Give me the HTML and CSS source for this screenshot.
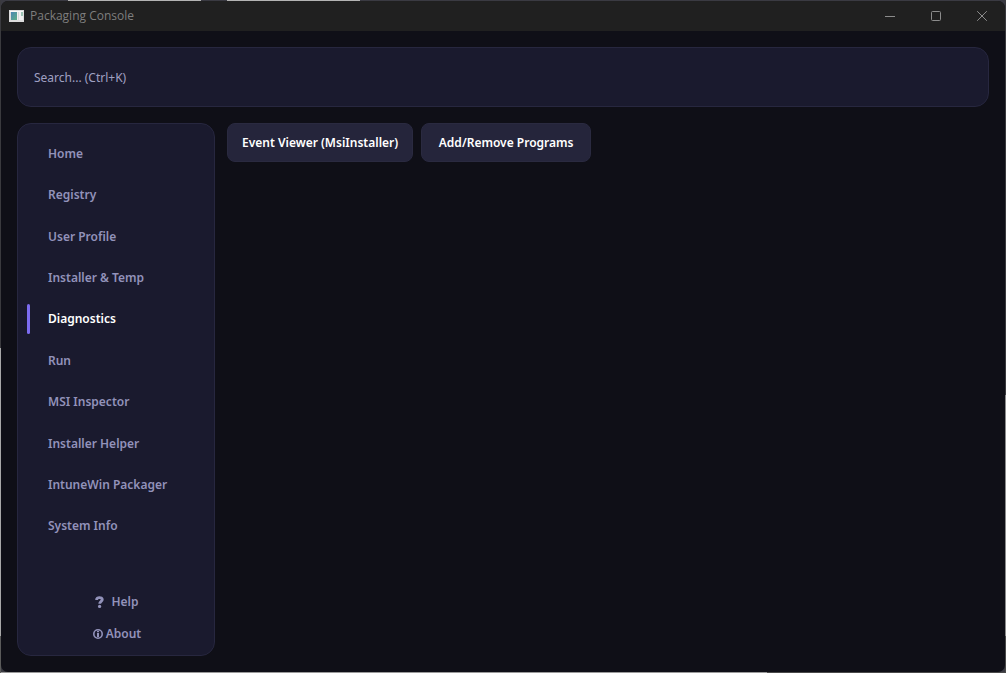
FILE: index.html
```html
<!DOCTYPE html>
<html lang="en">
<head>
  <meta charset="UTF-8">
  <meta name="viewport" content="width=device-width, initial-scale=1">
  <title>Packaging Console</title>
  <link rel="stylesheet" href="styles.css">
</head>
<body>
  <div class="window">
    <header class="titlebar">
      <svg class="app-icon" width="15" height="12" viewBox="0 0 15 12" aria-hidden="true">
        <defs>
          <linearGradient id="paneFill" x1="0" y1="0" x2="1" y2="1">
            <stop offset="0" stop-color="#4a86b4"/>
            <stop offset="1" stop-color="#5fae86"/>
          </linearGradient>
        </defs>
        <rect width="15" height="12" fill="#dcdcdc"/>
        <rect x="1" y="1" width="13" height="1" fill="#f8f8f8"/>
        <rect x="2" y="2" width="6" height="8" fill="url(#paneFill)"/>
        <rect x="8" y="2" width="4" height="8" fill="#f0f0f0"/>
        <rect x="9" y="2" width="1" height="8" fill="#d8d8dc"/>
        <rect x="12" y="2" width="2" height="4" fill="#9cc4b4"/>
        <rect x="12" y="6" width="2" height="4" fill="#f0f0f0"/>
      </svg>
      <span class="title">Packaging Console</span>
      <div class="window-controls">
        <button class="control" type="button" aria-label="Minimize">
          <svg width="10" height="10" viewBox="0 0 10 10"><path d="M0 5.5h10"/></svg>
        </button>
        <button class="control" type="button" aria-label="Maximize">
          <svg width="10" height="10" viewBox="0 0 10 10"><rect x="0.5" y="0.5" width="9" height="9" rx="1"/></svg>
        </button>
        <button class="control" type="button" aria-label="Close">
          <svg width="10" height="10" viewBox="0 0 10 10"><path d="M0.2 0.2l9.6 9.6M9.8 0.2l-9.6 9.6"/></svg>
        </button>
      </div>
    </header>

    <div class="content">
      <input class="search" type="search" placeholder="Search... (Ctrl+K)" aria-label="Search">

      <div class="columns">
        <aside class="sidebar">
          <nav class="nav">
            <a class="nav-item" href="#home">Home</a>
            <a class="nav-item" href="#registry">Registry</a>
            <a class="nav-item" href="#user-profile">User Profile</a>
            <a class="nav-item" href="#installer-temp">Installer &amp; Temp</a>
            <a class="nav-item active" href="#diagnostics" aria-current="page">Diagnostics</a>
            <a class="nav-item" href="#run">Run</a>
            <a class="nav-item" href="#msi-inspector">MSI Inspector</a>
            <a class="nav-item" href="#installer-helper">Installer Helper</a>
            <a class="nav-item" href="#intunewin">IntuneWin Packager</a>
            <a class="nav-item" href="#system-info">System Info</a>
          </nav>
          <div class="links">
            <button class="link help" type="button">
              <svg width="9" height="12" viewBox="0 0 9 12" aria-hidden="true">
                <path d="M1.6 4C1.4 0.9 7.3 0.8 7.3 3.6C7.3 5.4 4.7 5.4 4.7 7.8" stroke-width="2.8"/>
                <circle class="dot" cx="4.6" cy="10.4" r="1.6"/>
              </svg>Help</button>
            <button class="link about" type="button">
              <svg width="10" height="10" viewBox="0 0 10 10" aria-hidden="true">
                <circle cx="5" cy="5" r="4.2" stroke-width="1.6"/>
                <path d="M5 2v1.2M5 4v4" stroke-width="2"/>
              </svg>About</button>
          </div>
        </aside>

        <main class="tools">
          <button class="tool" type="button">Event Viewer (MsiInstaller)</button>
          <button class="tool" type="button">Add/Remove Programs</button>
        </main>
      </div>
    </div>
  </div>
</body>
</html>
```
FILE: styles.css
```css
* {
  box-sizing: border-box;
}

/* what shows of the desktop around the window edge */
body {
  margin: 0;
  height: 100vh;
  padding: 1px;
  overflow: hidden;
  font-family: "Noto Sans", "Open Sans", sans-serif;
  font-size: 12px;
  line-height: 16px;
  background:
    linear-gradient(90deg, transparent 68px, #b4b4b4 68px 201px, transparent 201px 227px, #b4b4b4 227px 360px, transparent 360px) top / 100% 1px no-repeat,
    linear-gradient(#3a3a3e 348px, #a8a8a8 348px 636px, #5a5a5a 636px) left / 1px 100% no-repeat,
    linear-gradient(#3a3a3e 395px, #8c8c8c 395px 636px, #4a4a4a 636px) right / 1px 100% no-repeat,
    linear-gradient(90deg, #9a9a9a 767px, #4a4a4a 767px) bottom / 100% 1px no-repeat,
    #3a3a42;
}

button,
input {
  font: inherit;
}

.window {
  display: flex;
  flex-direction: column;
  height: 100%;
  overflow: hidden;
  border-radius: 7px;
  background: #0f0f17;
}

/* title bar */
.titlebar {
  display: flex;
  align-items: center;
  height: 30px;
  padding-left: 8px;
  background: #202020;
}

.title {
  margin-left: 6px;
  color: #7e7e7e;
  font-family: "Open Sans", sans-serif;
}

.window-controls {
  display: flex;
  align-self: stretch;
  margin-left: auto;
}

.control {
  display: flex;
  align-items: center;
  justify-content: center;
  width: 46px;
  padding: 0;
  border: none;
  background: none;
}

.control svg {
  fill: none;
  stroke: #8c8c8c;
}

/* main area */
.content {
  display: flex;
  flex: 1;
  flex-direction: column;
  gap: 16px;
  min-height: 0;
  padding: 16px;
}

.search {
  width: 100%;
  height: 60px;
  padding: 0 16px;
  border: 1px solid #27273f;
  border-radius: 14px;
  outline: none;
  color: #fff;
  background: #1a1a2e;
}

.search::placeholder {
  color: #a0a0c2;
  opacity: 1;
}

.columns {
  display: flex;
  flex: 1;
  gap: 12px;
  min-height: 0;
}

.sidebar {
  display: flex;
  flex-direction: column;
  width: 198px;
  padding: 9px 9px 5px;
  border: 1px solid #27273f;
  border-radius: 14px;
  background: #1a1a2e;
}

.nav {
  display: flex;
  flex: 1;
  flex-direction: column;
  margin-bottom: 39px;
}

.nav-item {
  display: flex;
  flex: 1;
  align-items: center;
  color: #9292ba;
  font-weight: 600;
  text-decoration: none;
}

.nav-item::before {
  content: "";
  width: 3px;
  height: 30px;
  margin-right: 18px;
  border-radius: 2px;
}

.nav-item.active {
  color: #fff;
}

.nav-item.active::before {
  background: #7c6cf0;
}

.links {
  display: flex;
  flex-direction: column;
  padding-left: 2px;
}

.link {
  display: flex;
  align-items: center;
  justify-content: center;
  gap: 3px;
  height: 32px;
  padding: 0;
  border: none;
  color: #9292ba;
  background: none;
  font-weight: 600;
}

.link svg {
  fill: none;
  stroke: currentColor;
}

.link .dot {
  fill: currentColor;
  stroke: none;
}

.help {
  gap: 7px;
}

.tools {
  display: flex;
  flex: 1;
  flex-wrap: wrap;
  align-content: flex-start;
  gap: 8px;
}

.tool {
  min-width: 170px;
  height: 39px;
  padding: 0 14px;
  border: 1px solid #2a2a40;
  border-radius: 8px;
  color: #fff;
  background: #25253b;
  font-weight: 600;
}
```
